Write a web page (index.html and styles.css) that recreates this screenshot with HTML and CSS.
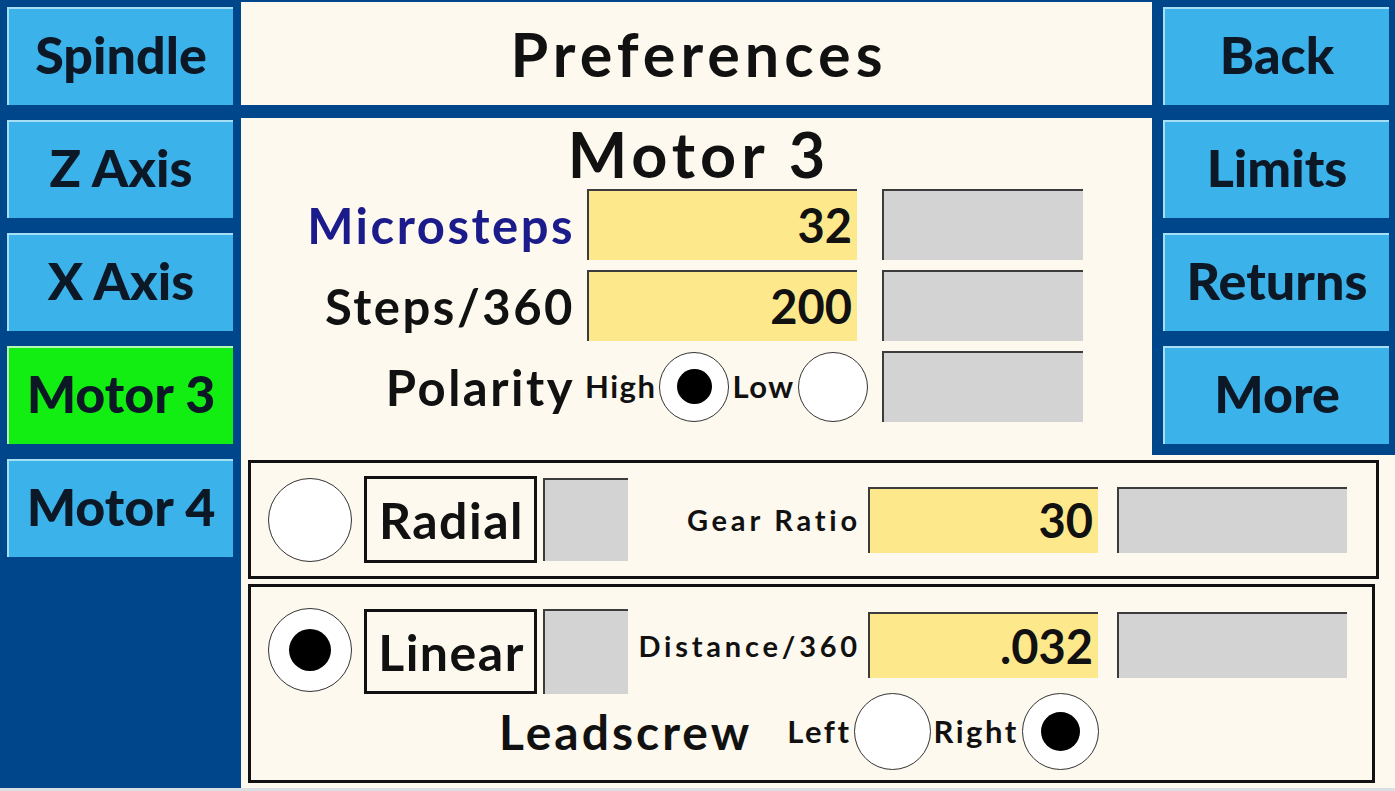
FILE: index.html
```html
<!DOCTYPE html>
<html lang="en">
<head>
<meta charset="utf-8">
<title>Preferences</title>
<link rel="stylesheet" href="styles.css">
</head>
<body>
<div class="screen">
  <nav class="side side-left">
    <div class="btn">Spindle</div>
    <div class="btn">Z Axis</div>
    <div class="btn">X Axis</div>
    <div class="btn active">Motor 3</div>
    <div class="btn">Motor 4</div>
  </nav>
  <div class="work">
    <div class="top">
      <div class="center">
        <header class="title-bar"><h1 class="title">Preferences</h1></header>
        <section class="motor">
          <h2 class="motor-title">Motor 3</h2>
          <div class="fields">
            <div class="label label-blue">Microsteps</div>
            <div class="input">32</div>
            <div class="gray"></div>
            <div class="label">Steps/360</div>
            <div class="input">200</div>
            <div class="gray"></div>
            <div class="label">Polarity</div>
            <div class="polarity">
              <span class="small">High</span>
              <span class="radio radio-s on"></span>
              <span class="small">Low</span>
              <span class="radio radio-s"></span>
            </div>
            <div class="gray"></div>
          </div>
        </section>
      </div>
      <nav class="side side-right">
        <div class="btn">Back</div>
        <div class="btn">Limits</div>
        <div class="btn">Returns</div>
        <div class="btn">More</div>
      </nav>
    </div>
    <div class="bottom">
      <div class="box box-radial">
        <div class="row">
          <span class="radio radio-l"></span>
          <div class="mode">Radial</div>
          <div class="gray gray-sq"></div>
          <div class="pair">
            <div class="flabel">Gear Ratio</div>
            <div class="input input-w">30</div>
            <div class="gray gray-w"></div>
          </div>
        </div>
      </div>
      <div class="box box-linear">
        <div class="row row-lin">
          <span class="radio radio-l on"></span>
          <div class="mode">Linear</div>
          <div class="gray gray-sq"></div>
          <div class="pair pair-lin">
            <div class="flabel">Distance/360</div>
            <div class="input input-w">.032</div>
            <div class="gray gray-w"></div>
          </div>
        </div>
        <div class="lead">
          <span class="lead-label">Leadscrew</span>
          <span class="small small-lead">Left</span>
          <span class="radio radio-m"></span>
          <span class="small small-lead">Right</span>
          <span class="radio radio-m on"></span>
        </div>
      </div>
    </div>
  </div>
</div>
<div class="strip"></div>
</body>
</html>
```

FILE: styles.css
```css
html, body {
  margin: 0;
  padding: 0;
}

body {
  width: 1395px;
  height: 791px;
  overflow: hidden;
  background: #d9dfe3;
  font-family: Lato, "Open Sans", sans-serif;
  color: #111;
}

.screen {
  display: grid;
  grid-template-columns: 241px 1fr;
  height: 788px;
  background: #00468a;
}

.side {
  display: flex;
  flex-direction: column;
  gap: 15px;
}

.side-left {
  padding: 7px 8px 0 7px;
}

.side-right {
  width: 226px;
  padding: 7px 6px 0 11px;
}

.btn {
  height: 98px;
  box-sizing: border-box;
  background: #3bb3ea;
  border-top: 2px solid #a6def4;
  border-left: 2px solid #a6def4;
  display: flex;
  align-items: center;
  justify-content: center;
  padding-bottom: 6px;
  font-weight: 900;
  font-size: 52px;
  line-height: 1;
  color: #0c1826;
  white-space: nowrap;
}

.btn.active {
  background: #12ee12;
  border-color: #b4f6b4;
}

.work {
  display: flex;
  flex-direction: column;
}

.top {
  display: flex;
  height: 455px;
}

.center {
  width: 911px;
  display: flex;
  flex-direction: column;
  gap: 13px;
  padding-top: 2px;
}

.title-bar {
  height: 103px;
  background: #fdf9ee;
  display: flex;
  align-items: center;
  justify-content: center;
}

.title {
  margin: 0;
  padding-left: 5px;
  font-size: 61px;
  line-height: 1;
  font-weight: 700;
  letter-spacing: 5px;
}

.motor {
  flex: 1;
  background: #fdf9ee;
}

.motor-title {
  margin: 0;
  height: 71px;
  padding-left: 5px;
  font-size: 63px;
  line-height: 71px;
  font-weight: 700;
  text-align: center;
  letter-spacing: 5px;
}

.fields {
  display: grid;
  grid-template-columns: 332px 284px 226px;
  grid-auto-rows: 71px;
  row-gap: 10px;
}

.label {
  display: flex;
  align-items: center;
  justify-content: flex-end;
  margin-right: -2px;
  font-size: 49px;
  font-weight: 700;
  letter-spacing: 2.5px;
  white-space: nowrap;
}

.label-blue {
  color: #1b1b8c;
}

.input {
  justify-self: end;
  width: 270px;
  box-sizing: border-box;
  background: #fde98c;
  border-top: 2px solid #3c3c3c;
  border-left: 2px solid #3c3c3c;
  display: flex;
  align-items: center;
  justify-content: flex-end;
  padding-right: 5px;
  font-size: 47px;
  font-weight: 700;
  line-height: 1;
}

.gray {
  justify-self: end;
  width: 201px;
  box-sizing: border-box;
  background: #d3d3d3;
  border-top: 2px solid #3c3c3c;
  border-left: 2px solid #3c3c3c;
}

.polarity {
  display: flex;
  align-items: center;
  padding-left: 12px;
  gap: 3px;
  white-space: nowrap;
}

.small {
  font-size: 31px;
  font-weight: 700;
  letter-spacing: 1.5px;
  line-height: 1;
}

.radio {
  box-sizing: border-box;
  border-radius: 50%;
  border: 1.5px solid #333;
  background: #fff;
  display: flex;
  align-items: center;
  justify-content: center;
  flex: none;
}

.radio.on::after {
  content: "";
  width: 52%;
  height: 52%;
  border-radius: 50%;
  background: #000;
}

.radio-s {
  width: 70px;
  height: 70px;
}

.radio-m {
  width: 77px;
  height: 77px;
}

.radio-l {
  width: 84px;
  height: 84px;
}

.bottom {
  flex: 1;
  background: #fdf9ee;
  padding: 5px 16px 5px 7px;
  display: flex;
  flex-direction: column;
  gap: 5px;
}

.box {
  border: 3px solid #111;
  box-sizing: border-box;
}

.box-radial {
  height: 119px;
  display: flex;
  align-items: center;
}

.box-linear {
  height: 199px;
  margin-right: 4px;
  padding-top: 21px;
}

.row {
  display: flex;
  align-items: center;
  padding-left: 17px;
}

.row-lin {
  height: 85px;
  align-items: flex-start;
}

.mode {
  margin-left: 12px;
  width: 173px;
  height: 87px;
  box-sizing: border-box;
  border: 3px solid #111;
  display: flex;
  align-items: center;
  justify-content: center;
  padding-left: 2px;
  font-size: 50px;
  font-weight: 700;
  letter-spacing: 1.5px;
  line-height: 1;
}

.gray-sq {
  margin-left: 6px;
  width: 85px;
  height: 83px;
}

.row-lin .mode {
  margin-top: 1px;
  height: 85px;
}

.row-lin .gray-sq {
  margin-top: 1px;
  height: 85px;
}

.pair {
  display: flex;
  align-items: center;
}

.pair-lin {
  margin-top: 4px;
}

.flabel {
  width: 233px;
  margin-right: -3px;
  text-align: right;
  font-size: 29px;
  font-weight: 700;
  letter-spacing: 3.8px;
  white-space: nowrap;
}

.input-w {
  margin-left: 10px;
  width: 230px;
  height: 66px;
}

.gray-w {
  margin-left: 19px;
  width: 230px;
  height: 66px;
}

.lead {
  display: flex;
  align-items: center;
  height: 77px;
  padding-left: 248px;
  white-space: nowrap;
}

.lead-label {
  font-size: 48px;
  font-weight: 700;
  letter-spacing: 3px;
  margin-right: 33px;
}

.small-lead {
  margin: 0 3px 0 2px;
  letter-spacing: 2.5px;
}

.strip {
  height: 3px;
}
```
